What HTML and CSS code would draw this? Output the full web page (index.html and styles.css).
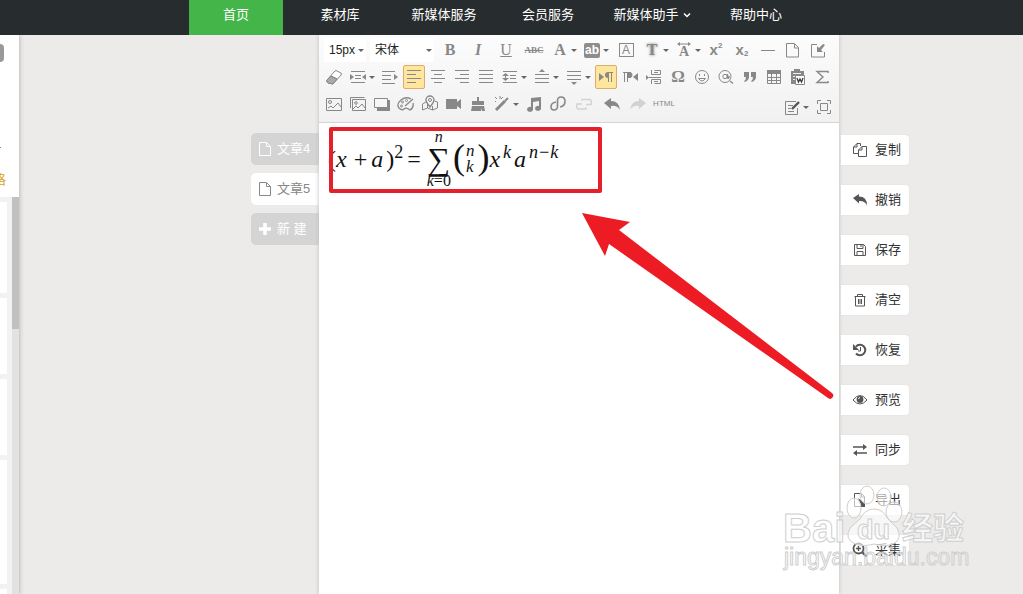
FILE: index.html
```html
<!DOCTYPE html>
<html lang="zh-CN">
<head>
<meta charset="utf-8">
<title>素材编辑器</title>
<link rel="stylesheet" href="styles.css">
</head>
<body>
<svg class="defs" aria-hidden="true">
  <symbol id="eraser" viewBox="0 0 20 20"><path d="M3 13 11 4q1-1 2 0l4 2q1 1 0 2l-8 9-5-1q-2-1-1-3z" fill="#fff"/><path d="M3 13q-1 2 1 3l5 1 4-5-6-3z" fill="#aaa"/><path d="m7 9 6 3"/></symbol>
  <symbol id="indent" viewBox="0 0 20 20"><path d="M3 4.500h14M7 8.500h6M7 11.500h6M3 15.500h14"/><path class="f" d="m2 7 4 3-4 3zM18 7l-4 3 4 3z"/></symbol>
  <symbol id="rindent" viewBox="0 0 20 20"><path d="M2 4.500h13M2 8.500h9M2 12.500h9M2 16.500h13"/><path class="f" d="m14 7 4 3-4 3z"/></symbol>
  <symbol id="left" viewBox="0 0 20 20"><path d="M3 3.500h14M3 7.500h9M3 11.500h14M3 15.500h9"/></symbol>
  <symbol id="center" viewBox="0 0 20 20"><path d="M3 3.500h14M6 7.500h8M3 11.500h14M6 15.500h8"/></symbol>
  <symbol id="right" viewBox="0 0 20 20"><path d="M3 3.500h14M8 7.500h9M3 11.500h14M8 15.500h9"/></symbol>
  <symbol id="justify" viewBox="0 0 20 20"><path d="M3 3.500h14M3 7.500h14M3 11.500h14M3 15.500h14"/></symbol>
  <symbol id="lineheight" viewBox="0 0 20 20"><path d="M3 4.500h14M10 8.500h6M10 11.500h6M3 15.500h14M5.500 8v4"/><path class="f" d="m2 9 3.500-3L9 9zM2 11l3.500 3L9 11z"/></symbol>
  <symbol id="before" viewBox="0 0 20 20"><path d="M3 7.500h14M3 11.500h14M3 15.500h14"/><path class="f" d="m7 5 3-3 3 3z"/></symbol>
  <symbol id="after" viewBox="0 0 20 20"><path d="M3 4.500h14M3 8.500h14M3 12.500h14"/><path class="f" d="m7 15 3 3 3-3z"/></symbol>
  <symbol id="ltr" viewBox="0 0 20 20"><path class="f" d="m3 6 5 4-5 4zM17 5v1h-1v9h-1V6h-2v9h-1v-4q-3 0-3-3t3-3z"/></symbol>
  <symbol id="rtl" viewBox="0 0 20 20"><path d="M3 5.500h7q2 0 2 2.500t-2 2.500M4.500 6v9M7.500 6v9"/><path class="f" d="m18 6-5 4 5 4zM8 5h2q2 1 2 3t-2 3H8z"/></symbol>
  <symbol id="pagebreak" viewBox="0 0 20 20"><path d="M7.500 3v4.500h9V3.500h-6M7.500 17v-4.500h9v4h-6M5 10.500h12M10 5.500h4M10 14.500h4"/><path class="f" d="m2 8 3 2.500L2 13z"/></symbol>
  <symbol id="smile" viewBox="0 0 20 20"><circle cx="10" cy="10" r="6.500"/><path d="M6.500 11.500q3.500 5 7 0z"/><path d="M7.500 7v2M12.500 7v2"/></symbol>
  <symbol id="quote" viewBox="0 0 20 20"><path class="f" d="M4 5h5v5q0 3-4 5l-1-1q2-1 2-4H4zM11 5h5v5q0 3-4 5l-1-1q2-1 2-4h-2z"/></symbol>
  <symbol id="table" viewBox="0 0 20 20"><path class="f" d="M3 3h14v4H3z"/><path d="M3.500 6.500v10h13v-10M3 10.500h14M3 13.500h14M7.500 7v9M12.500 7v9"/></symbol>
  <symbol id="word" viewBox="0 0 20 20"><path class="f" d="M3 4h3V2h6v2h4v4H9v9H3z"/><path d="M5 6.500h8M5 9.500h3M5 12.500h3" stroke="#eee"/><path d="M7.500 8.500h9v9h-9z" fill="#fff"/><path d="m9 11 1.500 4 1.500-3 1.500 3 1.500-4" stroke="#444" stroke-width="1.400"/></symbol>
  <symbol id="sigma" viewBox="0 0 20 20"><path d="M16 6V4.500H5l6 5.500-6 5.500h11V14" stroke-width="1.400"/></symbol>
  <symbol id="picture" viewBox="0 0 20 20"><path d="M2.500 4.500h15v12h-15z"/><circle cx="6" cy="8" r="1.500"/><path d="m4 14 3-2 2 2 5-5 3 4"/></symbol>
  <symbol id="pictures" viewBox="0 0 20 20"><path d="M2.500 14V3.500h14M4.500 5.500h13v11h-13z"/><circle cx="8" cy="9" r="1.300"/><path d="m5 15 3-3 2 2 4-4 3 4"/></symbol>
  <symbol id="layer" viewBox="0 0 20 20"><path class="f" d="M5 6h13v11H5z"/><path d="M2.500 4.500h13v9h-13z" fill="#f6f6f6"/></symbol>
  <symbol id="palette" viewBox="0 0 20 20"><path d="M15 5Q10 2 5 6t-2 8q3 3 5 1t6 1q4-2 3-7M9 12l8-7" stroke-width="1.300"/><circle cx="6.500" cy="8" r="1"/><circle cx="10.500" cy="6.500" r="1"/><circle cx="5.500" cy="12" r="1"/></symbol>
  <symbol id="map" viewBox="0 0 20 20"><path d="m6 8-3.500 2v6l5-2 5 2 5-2V8l-3-1M7.500 10v4M12.500 12v4"/><path d="M10 13Q6 8 6 6a4 4 0 0 1 8 0q0 2-4 7z" fill="#f6f6f6" stroke-width="1.400"/><circle cx="10" cy="6" r="1.500"/></symbol>
  <symbol id="video" viewBox="0 0 20 20"><path class="f" d="M2 5h11v3l4-3v10l-4-3v3H2z"/></symbol>
  <symbol id="broom" viewBox="0 0 20 20"><path class="f" d="M9 3h2v4h5v4H4V7h5zM4 12h12l1 5h-3v-3l-1 3H3z"/></symbol>
  <symbol id="wand" viewBox="0 0 20 20"><path d="m4 16 9-9" stroke-width="3"/><path d="m13 7 3-3" stroke-width="2"/><path d="m3 3 2 2M8 2v3M11 3 9 5M4 7l-1 1"/></symbol>
  <symbol id="music" viewBox="0 0 20 20"><path class="f" d="m7 4 10-1v11a3 2.500 0 1 1-2-2V7L9 8v7a3 2.500 0 1 1-2-2z"/></symbol>
  <symbol id="link" viewBox="0 0 20 20"><path d="M12 13q5-1 5-5.500Q17 3 13 3 9.500 3 9.500 7v5q0 4-3.500 4-3 0-3-3.500Q3 9 8 8" stroke-width="1.600"/></symbol>
  <symbol id="unlink" viewBox="0 0 20 20"><path d="M8 7V5.500h8q2 1 1 5h-5M12 13v2H4q-2-1-1-5h5" stroke-width="1.400"/></symbol>
  <symbol id="undo" viewBox="0 0 20 20"><path class="f" d="M2 9 9 4v3q8 0 9 9-3-5-9-4v3z"/></symbol>
  <symbol id="redo" viewBox="0 0 20 20"><path class="f" d="m18 9-7-5v3q-8 0-9 9 3-5 9-4v3z"/></symbol>
  <symbol id="page" viewBox="0 0 20 20"><path d="M4.500 3.500h8l4 4v9.500h-12zM12.500 4v4h4"/></symbol>
  <symbol id="import" viewBox="0 0 20 20"><path d="M9 4.500H3.500v12.500h13v-5"/><path class="f" d="M9 6v6h6l-2-2 4-5-2-1-4 4z"/></symbol>
  <symbol id="note" viewBox="0 0 20 20"><path d="M14 4.500H3.500v13h12V11M6 8.500h5M6 11.500h3M6 14.500h6"/><path d="m10 12 7-7" stroke-width="2.400" stroke="#555"/></symbol>
  <symbol id="full" viewBox="0 0 20 20"><path d="M6.500 6.500h7v7h-7zM3.500 7V3.500H7M13 3.500h3.500V7M16.500 13v3.500H13M7 16.500H3.500V13"/></symbol>
  <symbol id="copy" viewBox="0 0 16 16"><path d="M8.500 4V1.500H5L1.500 5v6.500H6M1.500 5H5V1.500M6.500 8 10 4.500h4.500v10h-8zM6.500 8H10V4.500"/></symbol>
  <symbol id="reply" viewBox="0 0 16 16"><path class="f" d="M1 6 7 2v2.500q8 0 8 9-2-5-8-4.500v2.500z"/></symbol>
  <symbol id="save" viewBox="0 0 16 16"><path d="M2.500 2.500h9l2 2v9h-11zM5 2.500v4h6v-4M5 13.500v-4h6v4M9 3v2"/></symbol>
  <symbol id="trash" viewBox="0 0 16 16"><path d="M2.500 4.500h11M5.500 4V2.500h5V4M3.500 5v9h9V5M6.500 7v5M9.500 7v5M8 7v5"/></symbol>
  <symbol id="history" viewBox="0 0 16 16"><path d="M4 4.500a5.300 5.300 0 1 1 0 7" stroke-width="2"/><path class="f" d="M1 2v6h6z"/><path d="M8.500 5v4H6"/></symbol>
  <symbol id="eye" viewBox="0 0 16 16"><path d="M1 8q7-9 14 0-7 8-14 0z"/><circle class="f" cx="8" cy="7.500" r="3.400"/><path d="M6.500 7q0-1 1.500-1.500" stroke="#fff"/></symbol>
  <symbol id="sync" viewBox="0 0 16 16"><path d="M1 5h12M3 11h12" stroke-width="1.600"/><path class="f" d="m11 2 4 3-4 3zM5 8l-4 3 4 3z"/></symbol>
  <symbol id="export" viewBox="0 0 16 16"><path d="M2.500 1.500h7l3 3v10h-10zM9.500 2v3h3"/><path class="f" d="m6 6 5 4 2-1v6H7l2-2z"/></symbol>
  <symbol id="zoomin" viewBox="0 0 16 16"><circle cx="6.500" cy="6.500" r="5" stroke-width="1.800"/><path d="m10.500 10.500 4 4" stroke-width="2.400"/><path d="M4 6.500h5M6.500 4v5" stroke-width="1.400"/></symbol>
  <symbol id="plus" viewBox="0 0 16 16"><path d="M8 2v12M2 8h12" stroke-width="3.500"/></symbol>
  <symbol id="sheet" viewBox="0 0 16 16"><path d="M2.500 1.500h7l4 4v9h-11zM9.500 2v3.500h4"/></symbol>
</svg>

<header class="topbar">
  <nav class="nav">
    <a class="nav-item current" href="#">首页</a>
    <a class="nav-item" href="#">素材库</a>
    <a class="nav-item" href="#">新媒体服务</a>
    <a class="nav-item" href="#">会员服务</a>
    <a class="nav-item" href="#">新媒体助手<svg class="chevron" viewBox="0 0 8 8"><path d="m1 2.500 3 3 3-3"/></svg></a>
    <a class="nav-item" href="#">帮助中心</a>
  </nav>
</header>

<main class="workspace">
  <aside class="materials">
    <div class="materials-head"><span class="chip"></span><span class="more"></span><span class="filter">格</span></div>
    <div class="materials-list">
      <div class="cards"><div class="card large"></div><div class="card"></div><div class="card"></div><div class="card tall"></div><div class="card"></div></div>
      <div class="track"><div class="thumb"></div></div>
    </div>
  </aside>

  <div class="tabs">
    <button class="tab"><svg class="icon16"><use href="#sheet"/></svg>文章4</button>
    <button class="tab open"><svg class="icon16"><use href="#sheet"/></svg>文章5</button>
    <button class="tab"><svg class="icon16"><use href="#plus"/></svg>新 建</button>
  </div>

  <section class="editor">
    <div class="toolbar">
      <div class="row">
        <span class="pick size"><select aria-label="字号"><option>15px</option></select></span>
        <span class="pick family"><select aria-label="字体"><option>宋体</option></select></span>
        <button class="tool wide letter">B</button>
        <button class="tool wide letter"><i>I</i></button>
        <button class="tool wide letter light"><u>U</u></button>
        <button class="tool wide letter tiny"><s>ABC</s></button>
        <button class="tool drop letter"><span class="glyph">A</span></button>
        <button class="tool drop"><span class="glyph"><span class="solid">ab</span></span></button>
        <button class="tool wide"><span class="boxed">A</span></button>
        <button class="tool drop letter"><span class="glyph glow">T</span></button>
        <button class="tool drop" aria-label="字间距"><span class="glyph spaced"><svg viewBox="0 0 14 4"><path d="M2 2h10"/><path class="f" d="m0 2 3-2v4zM14 2l-3-2v4z"/></svg>A</span></button>
        <button class="tool script">x<sup>2</sup></button>
        <button class="tool wide script">x<sub>2</sub></button>
        <button class="tool" aria-label="分隔线"><span class="rule"></span></button>
        <button class="tool" aria-label="新建"><svg><use href="#page"/></svg></button>
        <button class="tool wide" aria-label="导入"><svg><use href="#import"/></svg></button>
      </div>
      <div class="row">
        <button class="tool" aria-label="清除格式"><svg><use href="#eraser"/></svg></button>
        <button class="tool drop" aria-label="两端缩进"><svg><use href="#indent"/></svg></button>
        <button class="tool" aria-label="首行缩进"><svg><use href="#rindent"/></svg></button>
        <button class="tool active" aria-label="居左"><svg><use href="#left"/></svg></button>
        <button class="tool" aria-label="居中"><svg><use href="#center"/></svg></button>
        <button class="tool" aria-label="居右"><svg><use href="#right"/></svg></button>
        <button class="tool" aria-label="两端对齐"><svg><use href="#justify"/></svg></button>
        <button class="tool drop" aria-label="行间距"><svg><use href="#lineheight"/></svg></button>
        <button class="tool drop" aria-label="段前距"><svg><use href="#before"/></svg></button>
        <button class="tool drop" aria-label="段后距"><svg><use href="#after"/></svg></button>
        <button class="tool active" aria-label="从左向右"><svg><use href="#ltr"/></svg></button>
        <button class="tool" aria-label="从右向左"><svg><use href="#rtl"/></svg></button>
        <button class="tool" aria-label="分页"><svg><use href="#pagebreak"/></svg></button>
        <button class="tool omega">Ω</button>
        <button class="tool" aria-label="表情"><svg><use href="#smile"/></svg></button>
        <button class="tool" aria-label="查找"><svg viewBox="0 0 20 20"><circle cx="9" cy="9.500" r="6"/><circle cx="9" cy="9.500" r="2.200"/><path d="M11.500 7v4q1.500 1 1.500-2M14 14l3 2.500" stroke-width="1.400"/></svg></button>
        <button class="tool" aria-label="引用"><svg><use href="#quote"/></svg></button>
        <button class="tool" aria-label="表格"><svg><use href="#table"/></svg></button>
        <button class="tool" aria-label="粘贴Word"><svg><use href="#word"/></svg></button>
        <button class="tool" aria-label="公式"><svg><use href="#sigma"/></svg></button>
      </div>
      <div class="row">
        <button class="tool" aria-label="图片"><svg><use href="#picture"/></svg></button>
        <button class="tool" aria-label="多图"><svg><use href="#pictures"/></svg></button>
        <button class="tool" aria-label="背景"><svg><use href="#layer"/></svg></button>
        <button class="tool" aria-label="涂鸦"><svg><use href="#palette"/></svg></button>
        <button class="tool" aria-label="地图"><svg><use href="#map"/></svg></button>
        <button class="tool" aria-label="视频"><svg><use href="#video"/></svg></button>
        <button class="tool" aria-label="格式刷"><svg><use href="#broom"/></svg></button>
        <button class="tool drop" aria-label="自动排版"><svg><use href="#wand"/></svg></button>
        <button class="tool" aria-label="音乐"><svg><use href="#music"/></svg></button>
        <button class="tool" aria-label="链接"><svg><use href="#link"/></svg></button>
        <button class="tool wide faint" aria-label="取消链接"><svg><use href="#unlink"/></svg></button>
        <button class="tool wide" aria-label="撤销"><svg><use href="#undo"/></svg></button>
        <button class="tool faint" aria-label="重做"><svg><use href="#redo"/></svg></button>
        <button class="tool wide code">HTML</button>
        <div class="row-end">
          <button class="tool drop" aria-label="批注"><svg><use href="#note"/></svg></button>
          <button class="tool" aria-label="全屏"><svg><use href="#full"/></svg></button>
        </div>
      </div>
    </div>
    <div class="canvas">
      <div class="formula">
        <span>(</span><i>x</i><span class="op">+</span><i>a</i><span>)</span><span class="sup">2</span><span class="op">=</span>
        <span class="sum"><i>n</i><b>∑</b><span><i>k</i>=0</span></span>
        <span class="paren">(</span><span class="binom"><i>n</i><i>k</i></span><span class="paren">)</span>
        <i>x</i><i class="sup">k</i><i>a</i><i class="sup">n−k</i>
      </div>
      <div class="frame"></div>
      <svg class="arrow" viewBox="0 0 254 188"><path d="m1 1 48 9-11 8 213 163a3 3 0 0 1-4 5L28 32l-4 12z"/></svg>
    </div>
  </section>

  <aside class="actions">
    <button class="action"><svg class="icon16"><use href="#copy"/></svg>复制</button>
    <button class="action"><svg class="icon16"><use href="#reply"/></svg>撤销</button>
    <button class="action"><svg class="icon16"><use href="#save"/></svg>保存</button>
    <button class="action"><svg class="icon16"><use href="#trash"/></svg>清空</button>
    <button class="action"><svg class="icon16"><use href="#history"/></svg>恢复</button>
    <button class="action"><svg class="icon16"><use href="#eye"/></svg>预览</button>
    <button class="action"><svg class="icon16"><use href="#sync"/></svg>同步</button>
    <button class="action"><svg class="icon16"><use href="#export"/></svg>导出</button>
    <button class="action"><svg class="icon16"><use href="#zoomin"/></svg>采集</button>
    <svg class="watermark" viewBox="0 0 190 92">
      <g class="mark">
        <text x="1" y="59" font-size="40">Bai</text>
        <ellipse cx="85" cy="12" rx="7" ry="9"/><ellipse cx="102" cy="14" rx="7" ry="9"/><ellipse cx="72" cy="25" rx="7" ry="10"/><ellipse cx="112" cy="29" rx="8" ry="10"/>
        <path d="M92 26q9 0 14 10l9 9q6 11-4 16-8 3-19 0-11 3-19 0-11-5-5-16l10-9q5-10 14-10z"/>
        <text x="75" y="56" font-size="27">du</text>
        <text x="120" y="56" font-size="31">经验</text>
      </g>
      <text class="site" x="2" y="82" font-size="23">jingyan.baidu.com</text>
    </svg>
  </aside>
</main>
</body>
</html>
```
FILE: styles.css
```css
* { box-sizing: border-box; }
body {
  margin: 0;
  min-height: 100vh;
  display: flex;
  flex-direction: column;
  overflow: hidden;
  background: #ecebea;
  font: 13px/20px "Liberation Sans", "Noto Sans CJK SC", sans-serif;
  color: #333;
}
button, select { font: inherit; color: inherit; border: 0; margin: 0; padding: 0; background: none; }
svg { fill: none; stroke: currentColor; }
.defs { position: absolute; width: 0; height: 0; }
.f { fill: currentColor; stroke: none; }
.icon16 { width: 16px; height: 16px; flex: none; }

.topbar { background: #272c2e; padding-left: 18%; }
.nav { display: grid; grid-template-columns: repeat(6, 104px); }
.nav-item {
  height: 35px;
  margin: 0 5px;
  padding-bottom: 6px;
  display: flex;
  align-items: center;
  justify-content: center;
  gap: 4px;
  color: #fff;
  text-decoration: none;
  white-space: nowrap;
}
.nav-item.current { background: #43b549; }
.chevron { width: 8px; height: 8px; stroke-width: 1.500; }

.workspace {
  flex: 1;
  display: grid;
  grid-template-columns: 19px minmax(0, 232fr) 68px 520px 70px minmax(0, 114fr);
}

.materials { grid-column: 1; display: flex; flex-direction: column; box-shadow: 1px 0 4px #bbb; background: #f3f2f3; clip-path: inset(0 -6px 0 0); }
.materials-head { height: 162px; background: #fff; display: flex; flex-direction: column; align-items: flex-start; padding-top: 9px; }
.chip { width: 4px; height: 18px; background: #999; border-radius: 0 4px 4px 0; }
.more { width: 1px; height: 1px; margin-top: 85px; background: #b77; }
.filter { color: #dba520; width: 6px; margin-top: 22px; display: flex; justify-content: flex-end; }
.materials-list { flex: 1; display: flex; justify-content: space-between; }
.cards { width: 7px; padding-top: 5px; display: flex; flex-direction: column; gap: 5px; }
.card { height: 76px; background: #fff; }
.card.large { height: 91px; }
.card.tall { height: 124px; }
.card:last-child { height: auto; flex: 1; }
.track { width: 7px; background: #e2e2e2; }
.thumb { height: 132px; background: #c1c1c1; }

.tabs { grid-column: 3; padding-top: 98px; display: flex; flex-direction: column; gap: 8px; }
.tab { height: 32px; padding-left: 6px; display: flex; align-items: center; gap: 4px; border-radius: 5px 0 0 5px; background: #d4d4d4; color: #fff; white-space: nowrap; }
.tab.open { background: #fff; color: #888; }

.editor { grid-column: 4; background: #fff; display: flex; flex-direction: column; box-shadow: 0 0 4px #bbb; position: relative; z-index: 1; clip-path: inset(0 -4px 0 -4px); }
.toolbar { padding: 3px 5px 6px; display: flex; flex-direction: column; gap: 3px; background: linear-gradient(#fcfcfc, #f1f1f1); border-bottom: 1px solid #d4d4d4; color: #888; }
.row { height: 24px; display: flex; gap: 4px; }
.row-end { margin: 3px 0 0 auto; display: flex; gap: 4px; }
.tool { width: 20px; height: 24px; display: flex; align-items: center; justify-content: center; flex: none; }
.tool svg { width: 20px; height: 20px; flex: none; }
.tool.wide { width: 24px; }
.tool.drop { width: 28px; justify-content: flex-start; }
.tool.drop::after, .pick::after { content: ""; flex: none; border: 3px solid transparent; border-top-color: #666; border-bottom: 0; margin-left: 1px; }
.tool.active { width: 22px; margin: 0 -1px; background: #ffe69f; border: 1px solid #dcac6c; border-radius: 2px; }
.tool.faint { color: #d2d2d2; }
.pick { display: flex; align-items: center; background: #fff; padding: 0 2px 0 5px; color: #222; }
.pick.size { width: 42px; }
.pick.family { width: 64px; }
.pick select { appearance: none; flex: 1; min-width: 0; height: 20px; font-size: 12px; outline: 0; }
.letter { font: bold 16px/20px "Liberation Serif", serif; }
.letter.light { font-weight: normal; }
.letter.tiny { font-size: 9px; }
.glyph { width: 20px; text-align: center; }
.glow { text-shadow: 0 0 3px #777; }
.spaced { display: flex; flex-direction: column; align-items: center; font: bold 14px/12px "Liberation Serif", serif; }
.tool .spaced svg { width: 14px; height: 4px; }
.solid { display: block; margin: 0 2px; height: 15px; border-radius: 2px; background: #8d8d8d; color: #fff; font: bold 12px/14px "Liberation Sans", sans-serif; }
.boxed { width: 15px; height: 14px; border: 1px solid #888; font: 12px/12px "Liberation Sans", sans-serif; text-align: center; }
.script { font: bold 15px/20px "Liberation Sans", sans-serif; }
.script sup, .script sub { font-size: 8px; line-height: 8px; align-self: center; }
.script sup { padding-bottom: 8px; }
.script sub { padding-top: 8px; }
.rule { width: 14px; border-top: 1px solid #888; }
.omega { font: bold 17px/20px "Liberation Serif", serif; }
.code { font: 8px/20px "Liberation Sans", sans-serif; }

.canvas { flex: 1; position: relative; }
.formula { display: flex; align-items: center; padding: 4px 0 0 9px; height: 68px; font: 24px/28px "Liberation Serif", serif; color: #111; }
.formula i { padding-right: 3px; }
.formula .op { padding: 0 4px; }
.formula .sup { font-size: 18px; padding-bottom: 14px; }
.sum { display: flex; flex-direction: column; align-items: center; font-size: 16px; line-height: 14px; padding: 0 2px; }
.sum i, .formula .sum span i { padding: 0; }
.sum b { font-weight: normal; font-size: 32px; line-height: 30px; }
.paren { font-size: 36px; line-height: 36px; padding-bottom: 4px; }
.binom { display: flex; flex-direction: column; font-size: 17px; line-height: 16px; padding-left: 1px; }
.frame { position: absolute; left: 10px; top: 4px; width: 273px; height: 66px; border: 4px solid #e5202a; border-radius: 2px; }
.arrow { position: absolute; left: 262px; top: 89px; width: 254px; height: 188px; fill: #ed1c24; stroke: none; }

.actions { grid-column: 5; position: relative; z-index: 2; padding: 100px 0 0 2px; display: flex; flex-direction: column; gap: 20px; }
.action { height: 30px; padding-left: 11px; display: flex; align-items: center; gap: 7px; background: #fff; border-radius: 0 4px 4px 0; box-shadow: 0 0 2px #ddd; color: #333; white-space: nowrap; }
.action svg { color: #555; }
.watermark { position: absolute; left: -57px; top: 448px; width: 190px; height: 92px; pointer-events: none; stroke: #cfcfcf; fill: #fff; fill-opacity: 0.600; stroke-width: 1; font-family: "Liberation Sans", "Noto Sans CJK SC", sans-serif; }
.mark { font-weight: bold; }
.site { fill-opacity: 0.300; }
```
